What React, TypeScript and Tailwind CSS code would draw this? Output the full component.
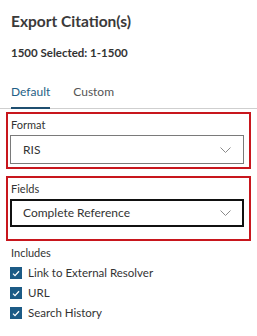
import React from "react";

const Chevron = () => (
  <svg width="11" height="6" viewBox="0 0 11 6" fill="none">
    <path d="M0.5 0.5l5 5 5-5" stroke="#8a8a8a" strokeWidth="1" />
  </svg>
);

const Check = ({ label }: { label: string }) => (
  <div className="flex items-center h-[20px]">
    <div className="w-[12px] h-[12px] bg-[#1c5b86] flex items-center justify-center">
      <svg width="8" height="7" viewBox="0 0 8 7" fill="none">
        <path d="M1 3.6l2 2L7 1.2" stroke="#fff" strokeWidth="1.3" />
      </svg>
    </div>
    <span className="ml-[6px] text-[11.5px] text-[#333]">{label}</span>
  </div>
);

export default function App() {
  return (
    <div
      className="w-[257px] h-[336px] bg-white overflow-hidden text-[#333]"
      style={{ fontFamily: "Lato, 'Noto Sans', sans-serif" }}
    >
      <div className="pl-[11px] pt-[10px] text-[15.5px] font-bold leading-[22px] text-[#3a3a3a]">
        Export Citation(s)
      </div>
      <div className="pl-[11px] mt-[12px] text-[11.5px] font-bold leading-[18px] text-[#333]">
        1500 Selected: 1-1500
      </div>
      <div className="mt-[22px] flex border-b border-[#cfcfcf] pl-[11px]">
        <div className="text-[12px] leading-[16px] text-[#1f5f86] pb-[7px] border-b-2 border-[#1f4f70] -mb-[1px]">
          Default
        </div>
        <div className="ml-[23px] text-[12px] leading-[16px] text-[#555] pb-[7px]">
          Custom
        </div>
      </div>
      <div className="mt-[3px] mx-[6px] border-2 border-[#c8161d] pl-[2px] pr-[5px] pt-[3px] pb-[3px]">
        <div className="pl-[1px] text-[11px] leading-[16px] text-[#333] mb-[2px]">Format</div>
        <div className="h-[29px] border border-[#7a7a7a] flex items-center justify-between pl-[12px] pr-[12px]">
          <span className="text-[12px] text-[#333]">RIS</span>
          <Chevron />
        </div>
      </div>
      <div className="mt-[7px] mx-[6px] border-2 border-[#c8161d] pl-[2px] pr-[5px] pt-[3px] pb-[12px]">
        <div className="pl-[1px] text-[11px] leading-[16px] text-[#333] mb-[2px]">Fields</div>
        <div className="h-[28px] border-2 border-[#111] flex items-center justify-between pl-[11px] pr-[11px]">
          <span className="text-[12px] text-[#333]">Complete Reference</span>
          <Chevron />
        </div>
      </div>
      <div className="pl-[11px] mt-[4px] text-[11px] leading-[16px] text-[#333]">Includes</div>
      <div className="pl-[10px] mt-[2px] flex flex-col">
        <Check label="Link to External Resolver" />
        <Check label="URL" />
        <Check label="Search History" />
      </div>
    </div>
  );
}
